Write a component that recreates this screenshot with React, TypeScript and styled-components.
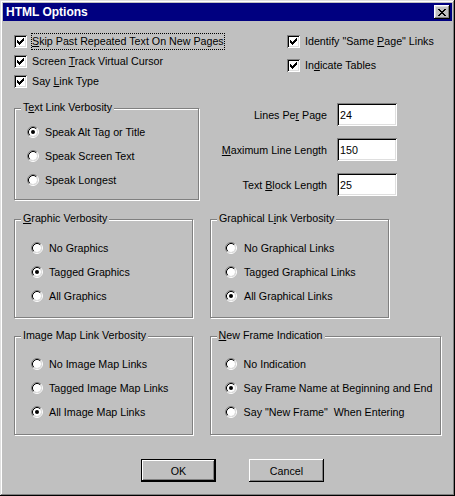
import React from "react"
import styled, { createGlobalStyle } from "styled-components"

const GlobalStyle = createGlobalStyle`
  html, body {
    margin: 0;
    padding: 0;
    background: #c0c0c0;
  }
  body {
    font-family: "Liberation Sans", Arial, sans-serif;
    font-size: 10.7px;
    color: #000;
  }
`

const Window = styled.div`
  box-sizing: border-box;
  width: 455px;
  height: 496px;
  padding: 3px;
  background: #c0c0c0;
  box-shadow: inset -1px -1px #000, inset 1px 1px #dfdfdf,
    inset -2px -2px #808080, inset 2px 2px #fff;
  display: flex;
  flex-direction: column;
`

const TitleBar = styled.div`
  height: 18px;
  display: flex;
  align-items: center;
  justify-content: space-between;
  padding: 0 2px 0 3px;
  background: #000080;
  color: #fff;
  font-weight: bold;
  font-size: 12px;
`

const CloseButton = styled.div`
  box-sizing: border-box;
  width: 16px;
  height: 14px;
  display: flex;
  align-items: center;
  justify-content: center;
  padding-right: 1px;
  background: #c0c0c0;
  box-shadow: inset -1px -1px #000, inset 1px 1px #fff,
    inset -2px -2px #808080, inset 2px 2px #dfdfdf;
`

const Body = styled.div`
  display: flex;
  flex-direction: column;
  padding: 8px 11px 0 11px;
`

const TopRow = styled.div`
  display: grid;
  grid-template-columns: 273px auto;
`

const CheckColumn = styled.div<{ $pt: number }>`
  display: flex;
  flex-direction: column;
  padding-top: ${p => p.$pt}px;
`

const CheckRow = styled.div<{ $h: number }>`
  height: ${p => p.$h}px;
  display: flex;
  align-items: center;
  gap: 4px;
`

const CheckBox = styled.span`
  box-sizing: border-box;
  width: 13px;
  height: 13px;
  display: flex;
  align-items: center;
  justify-content: center;
  background: #fff;
  box-shadow: inset 1px 1px #808080, inset -1px -1px #fff,
    inset 2px 2px #000, inset -2px -2px #dfdfdf;
`

const Label = styled.span<{ $focus?: boolean }>`
  border: 1px dotted ${p => (p.$focus ? "#000" : "transparent")};
  padding: 1px 0;
  line-height: 13px;
  white-space: nowrap;
`

const Key = styled.span`
  text-decoration: underline;
`

const MiddleRow = styled.div`
  display: grid;
  grid-template-columns: 185px 198px;
  align-items: start;
  margin-top: 12px;
`

type GroupBoxProps = { $w: number; $h: number; $pt: number; $pl: number }

const Group = styled.div<GroupBoxProps>`
  position: relative;
  box-sizing: border-box;
  width: ${p => p.$w}px;
  height: ${p => p.$h}px;
  padding: ${p => p.$pt}px 0 0 ${p => p.$pl}px;
  border: 1px solid #808080;
  box-shadow: inset 1px 1px #fff, 1px 1px #fff;
  display: flex;
  flex-direction: column;
`

const TextLinkGroup = styled(Group)`
  margin-top: 5px;
`

const Legend = styled.span`
  position: absolute;
  top: -8px;
  left: 6px;
  padding: 0 2px;
  background: #c0c0c0;
  line-height: 13px;
  white-space: nowrap;
`

const RadioRow = styled.div<{ $gap: number }>`
  height: 24px;
  display: flex;
  align-items: center;
  gap: ${p => p.$gap}px;
  white-space: nowrap;
  line-height: 13px;
`

const FieldList = styled.div`
  display: flex;
  flex-direction: column;
  align-items: flex-end;
  gap: 12px;
`

const FieldRow = styled.div`
  display: flex;
  align-items: center;
  gap: 10px;
`

const Input = styled.div`
  box-sizing: border-box;
  width: 60px;
  height: 23px;
  padding: 0 0 0 3px;
  display: flex;
  align-items: center;
  background: #fff;
  box-shadow: inset 1px 1px #808080, inset -1px -1px #fff,
    inset 2px 2px #000, inset -2px -2px #dfdfdf;
`

const GroupRow = styled.div<{ $mt: number }>`
  display: flex;
  gap: 17px;
  margin-top: ${p => p.$mt}px;
`

const ButtonRow = styled.div`
  display: flex;
  gap: 33px;
  margin: 24px 0 0 127px;
`

const Button = styled.div<{ $default?: boolean }>`
  box-sizing: border-box;
  width: 75px;
  height: 23px;
  display: flex;
  align-items: center;
  justify-content: center;
  background: #c0c0c0;
  border: ${p => (p.$default ? "1px solid #000" : "none")};
  box-shadow: ${p =>
    p.$default
      ? "inset -1px -1px #000, inset 1px 1px #fff, inset -2px -2px #808080"
      : "inset -1px -1px #000, inset 1px 1px #fff, inset -2px -2px #808080, inset 2px 2px #c0c0c0"};
`

// 7 columns of 3px-tall strokes make the classic check glyph
const CHECK_TOPS = [2, 3, 4, 3, 2, 1, 0]

const CheckMark = () => (
  <svg width="7" height="7" viewBox="0 0 7 7" shapeRendering="crispEdges">
    {CHECK_TOPS.map((top, x) => (
      <rect key={x} x={x} y={top} width="1" height="3" fill="#000" />
    ))}
  </svg>
)

const CLOSE_ROWS = ["XX....XX", ".XX..XX.", "..XXXX..", "...XX...", "..XXXX..", ".XX..XX.", "XX....XX"]

const CloseGlyph = () => (
  <svg width="8" height="7" viewBox="0 0 8 7" shapeRendering="crispEdges">
    {CLOSE_ROWS.flatMap((row, y) =>
      row.split("").map((c, x) =>
        c === "X" ? <rect key={`${x}-${y}`} x={x} y={y} width="1" height="1" fill="#000" /> : null
      )
    )}
  </svg>
)

const RadioMark = ({ on }: { on?: boolean }) => (
  <svg width="12" height="12" viewBox="0 0 12 12" style={{ flex: "none" }}>
    <path d="M2.11 9.89A5.5 5.5 0 0 1 9.89 2.11" stroke="#808080" fill="none" />
    <path d="M9.89 2.11A5.5 5.5 0 0 1 2.11 9.89" stroke="#fff" fill="none" />
    <circle cx="6" cy="6" r="4" fill="#fff" />
    <path d="M2.82 9.18A4.5 4.5 0 0 1 9.18 2.82" stroke="#000" fill="none" />
    <path d="M9.18 2.82A4.5 4.5 0 0 1 2.82 9.18" stroke="#dfdfdf" fill="none" />
    {on && <circle cx="6" cy="6" r="2" fill="#000" />}
  </svg>
)

type CheckProps = { h: number; focus?: boolean; children: React.ReactNode }

const Check = ({ h, focus, children }: CheckProps) => (
  <CheckRow $h={h}>
    <CheckBox>
      <CheckMark />
    </CheckBox>
    <Label $focus={focus}>{children}</Label>
  </CheckRow>
)

type RadioProps = { on?: boolean; gap?: number; children: React.ReactNode }

const Radio = ({ on, gap = 6, children }: RadioProps) => (
  <RadioRow $gap={gap}>
    <RadioMark on={on} />
    <span>{children}</span>
  </RadioRow>
)

type Choice = { label: string; on?: boolean }

type RadioGroupProps = {
  w: number
  h: number
  pt: number
  pl: number
  gap: number
  legend: React.ReactNode
  choices: Choice[]
}

const RadioGroup = ({ w, h, pt, pl, gap, legend, choices }: RadioGroupProps) => (
  <Group $w={w} $h={h} $pt={pt} $pl={pl}>
    <Legend>{legend}</Legend>
    {choices.map(c => (
      <Radio key={c.label} on={c.on} gap={gap}>
        {c.label}
      </Radio>
    ))}
  </Group>
)

export default function App() {
  return (
    <>
      <GlobalStyle />
      <Window>
        <TitleBar>
          <span>HTML Options</span>
          <CloseButton>
            <CloseGlyph />
          </CloseButton>
        </TitleBar>
        <Body>
          <TopRow>
            <CheckColumn $pt={2}>
              <Check h={20} focus>
                <Key>S</Key>kip Past Repeated Text On New Pages
              </Check>
              <Check h={20}>
                Screen <Key>T</Key>rack Virtual Cursor
              </Check>
              <Check h={20}>
                Say <Key>L</Key>ink Type
              </Check>
            </CheckColumn>
            <CheckColumn $pt={0}>
              <Check h={24}>
                Identify "Same <Key>P</Key>age" Links
              </Check>
              <Check h={24}>
                In<Key>d</Key>icate Tables
              </Check>
            </CheckColumn>
          </TopRow>

          <MiddleRow>
            <TextLinkGroup $w={185} $h={92} $pt={11} $pl={12}>
              <Legend>
                T<Key>e</Key>xt Link Verbosity
              </Legend>
              <Radio on>Speak Alt Tag or Title</Radio>
              <Radio>Speak Screen Text</Radio>
              <Radio>Speak Longest</Radio>
            </TextLinkGroup>
            <FieldList>
              <FieldRow>
                <span>
                  Lines Pe<Key>r</Key> Page
                </span>
                <Input>24</Input>
              </FieldRow>
              <FieldRow>
                <span>
                  <Key>M</Key>aximum Line Length
                </span>
                <Input>150</Input>
              </FieldRow>
              <FieldRow>
                <span>
                  Text <Key>B</Key>lock Length
                </span>
                <Input>25</Input>
              </FieldRow>
            </FieldList>
          </MiddleRow>

          <GroupRow $mt={19}>
            <RadioGroup
              w={179}
              h={99}
              pt={16}
              pl={16}
              gap={6}
              legend={
                <>
                  <Key>G</Key>raphic Verbosity
                </>
              }
              choices={[
                { label: "No Graphics" },
                { label: "Tagged Graphics", on: true },
                { label: "All Graphics" },
              ]}
            />
            <RadioGroup
              w={179}
              h={99}
              pt={16}
              pl={14}
              gap={7}
              legend={
                <>
                  Graphical L<Key>i</Key>nk Verbosity
                </>
              }
              choices={[
                { label: "No Graphical Links" },
                { label: "Tagged Graphical Links" },
                { label: "All Graphical Links", on: true },
              ]}
            />
          </GroupRow>

          <GroupRow $mt={18}>
            <RadioGroup
              w={179}
              h={99}
              pt={15}
              pl={16}
              gap={6}
              legend={
                <>
                  Ima<Key>g</Key>e Map Link Verbosity
                </>
              }
              choices={[
                { label: "No Image Map Links" },
                { label: "Tagged Image Map Links" },
                { label: "All Image Map Links", on: true },
              ]}
            />
            <RadioGroup
              w={232}
              h={99}
              pt={15}
              pl={14}
              gap={7}
              legend={
                <>
                  <Key>N</Key>ew Frame Indication
                </>
              }
              choices={[
                { label: "No Indication" },
                { label: "Say Frame Name at Beginning and End", on: true },
                { label: "Say \"New Frame\"\u00a0 When Entering" },
              ]}
            />
          </GroupRow>

          <ButtonRow>
            <Button $default>OK</Button>
            <Button>Cancel</Button>
          </ButtonRow>
        </Body>
      </Window>
    </>
  )
}
